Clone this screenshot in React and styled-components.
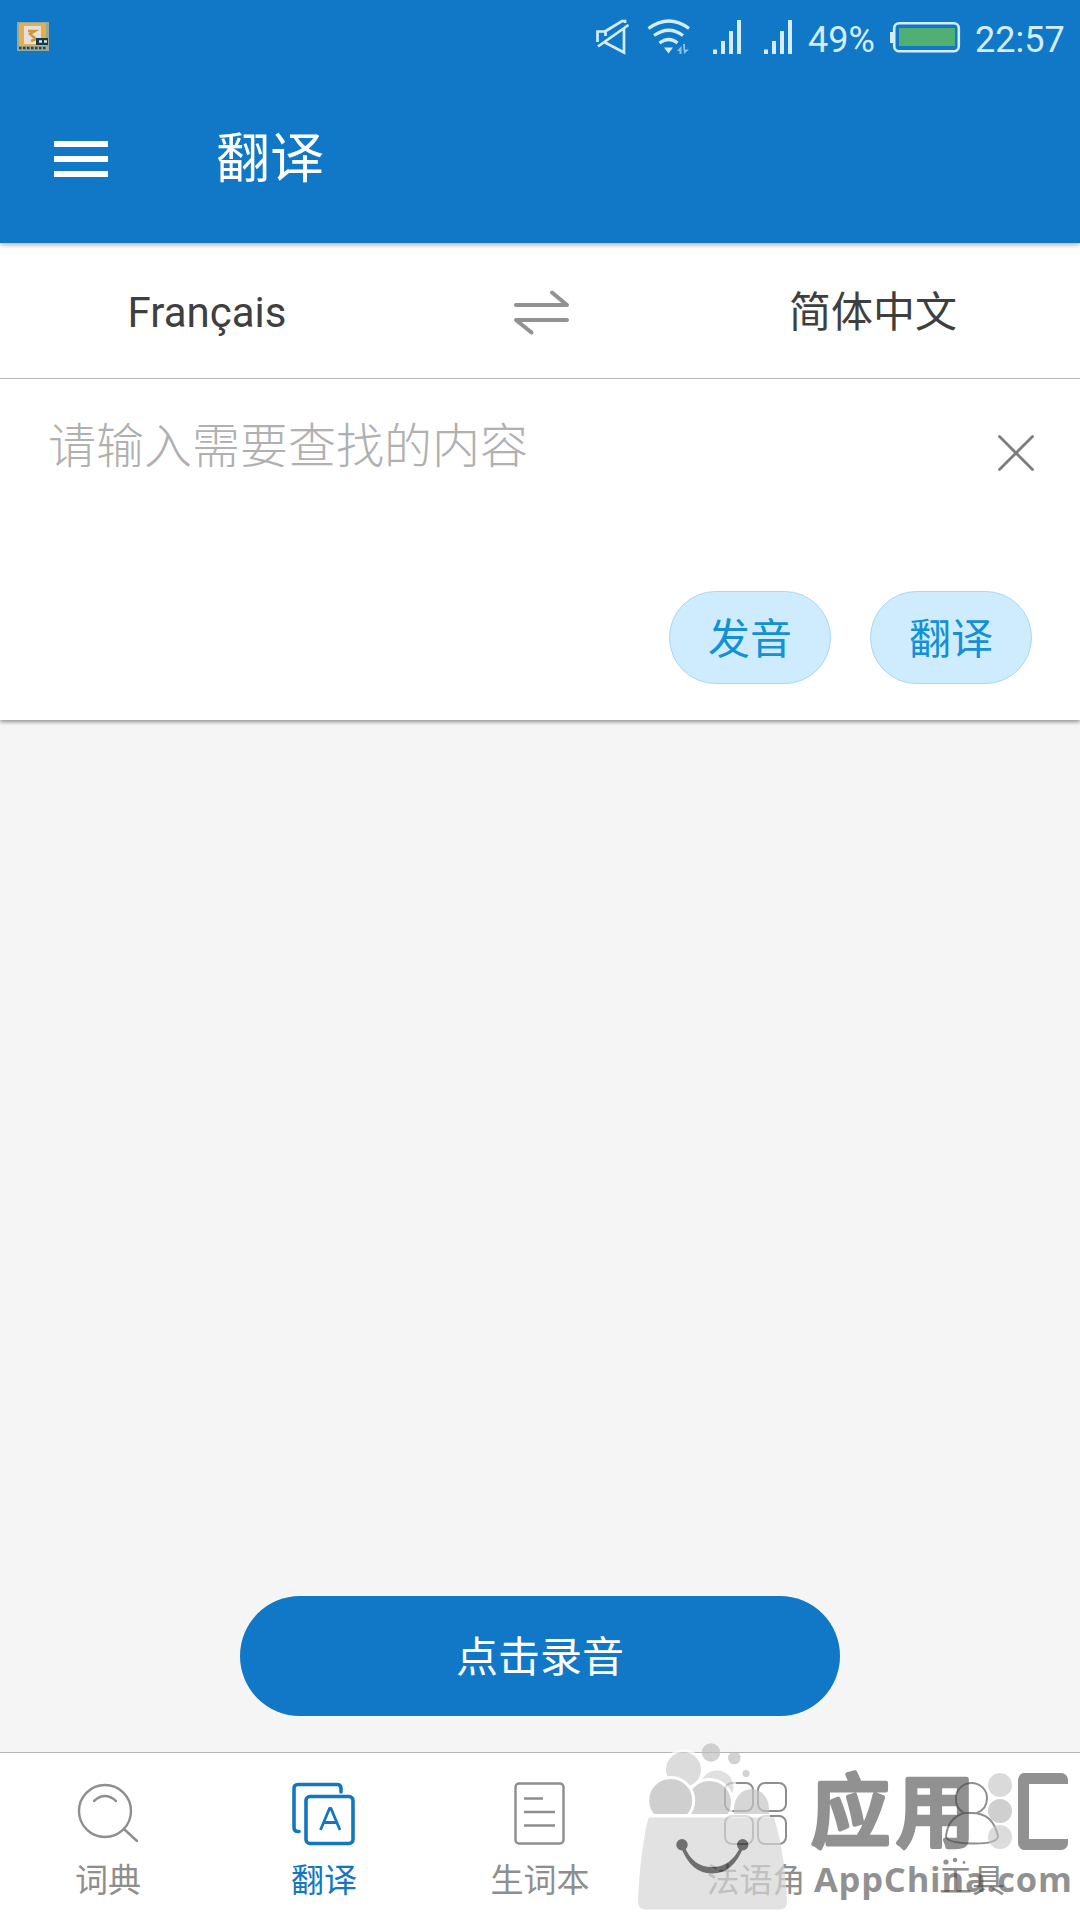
import React from "react";
import styled, { createGlobalStyle } from "styled-components";

const BLUE = "#1078c6";
const PALE = "#d3edff";
const GREY = "#8e8e8e";

const GlobalStyle = createGlobalStyle`
  * { box-sizing: border-box; }
  body { margin: 0; background: #f5f5f5; }
  svg { display: block; flex: none; }
  button { border: 0; padding: 0; margin: 0; background: none; font: inherit; color: inherit; }
`;

const Screen = styled.div`
  position: relative;
  display: flex;
  flex-direction: column;
  width: 1080px;
  height: 1920px;
  overflow: hidden;
  background: #f5f5f5;
  font-family: Roboto, "Noto Sans CJK SC", sans-serif;
`;

const Header = styled.header`
  position: relative;
  z-index: 1;
  height: 243px;
  background: ${BLUE};
  box-shadow: 0 2px 5px rgba(0, 0, 0, 0.3);
`;

const StatusBar = styled.div`
  display: flex;
  align-items: center;
  height: 74px;
  padding: 0 15px 0 16px;
  color: ${PALE};
`;

const StatusRight = styled.div`
  display: flex;
  align-items: center;
  margin-left: auto;
`;

const StatusText = styled.span`
  width: ${(p) => p.$width}px;
  padding-top: 5px;
  font-size: 36px;
  line-height: 44px;
  white-space: nowrap;
`;

const Gap = styled.i`
  width: ${(p) => p.$size}px;
`;

const TitleBar = styled.div`
  display: flex;
  align-items: center;
  height: 169px;
  padding: 0 54px 0;
  gap: 108px;
`;

const Menu = styled.button`
  display: flex;
  flex-direction: column;
  gap: 9px;
  width: 54px;
`;

const MenuLine = styled.span`
  height: 6px;
  background: #fff;
`;

const Title = styled.h1`
  margin: 0;
  padding-top: 2px;
  font-size: 54px;
  line-height: 64px;
  font-weight: 400;
  color: #fff;
`;

const LanguageRow = styled.div`
  display: grid;
  grid-template-columns: 414px 252px 414px;
  align-items: center;
  height: 136px;
  background: #fff;
  border-bottom: 1px solid #c4c4c4;
`;

const Language = styled.button`
  padding-top: 4px;
  font-size: 42px;
  line-height: 50px;
  text-align: center;
  color: #3f3f3f;
`;

const SwapButton = styled.button`
  display: flex;
  justify-content: center;
  padding: 2px 0 0 2px;
`;

const InputPanel = styled.section`
  display: flex;
  flex-direction: column;
  justify-content: space-between;
  height: 341px;
  padding: 38px 48px 36px;
  background: #fff;
  box-shadow: 0 2px 4px rgba(0, 0, 0, 0.4);
`;

const InputTop = styled.div`
  display: flex;
  justify-content: space-between;
  align-items: flex-start;
`;

const Placeholder = styled.span`
  font-size: 48px;
  line-height: 60px;
  font-weight: 300;
  color: #b0b0b0;
`;

const ClearButton = styled.button`
  margin: 17px -3px 0 0;
`;

const Chips = styled.div`
  display: flex;
  justify-content: flex-end;
  gap: 39px;
`;

const Chip = styled.button`
  width: 162px;
  height: 93px;
  padding-top: 4px;
  border: 1px solid #a6d8f4;
  border-radius: 47px;
  background: #cfecfe;
  color: #1490d5;
  font-size: 42px;
  line-height: 50px;
`;

const Body = styled.main`
  flex: 1;
  display: flex;
  align-items: flex-end;
  justify-content: center;
  padding-bottom: 36px;
`;

const RecordButton = styled.button`
  width: 600px;
  height: 120px;
  padding-top: 4px;
  border-radius: 60px;
  background: ${BLUE};
  color: #fff;
  font-size: 42px;
  line-height: 50px;
`;

const Nav = styled.nav`
  display: flex;
  height: 168px;
  border-top: 1px solid #b4b4b4;
  background: #fff;
`;

const NavItem = styled.a`
  flex: 1;
  display: flex;
  flex-direction: column;
  align-items: center;
  gap: 9px;
  padding-top: 25px;
  color: ${(p) => (p.$active ? "#1277c0" : GREY)};
  font-size: 33px;
  line-height: 44px;
`;

const Watermark = styled.div`
  position: absolute;
  left: 636px;
  bottom: 0;
  display: flex;
  align-items: flex-start;
  gap: 20px;
  width: 444px;
  height: 180px;
  pointer-events: none;
`;

const Bag = styled.svg`
  opacity: 0.7;
`;

const Wordmark = styled.div`
  padding-top: 28px;
  opacity: 0.6;
  color: #494949;
`;

const WordRow = styled.div`
  display: flex;
  align-items: center;
  height: 86px;
`;

const BrandLettering = styled.svg`
  overflow: visible;
  font-family: "Noto Sans CJK SC", sans-serif;
  font-weight: 500;
  font-size: 79px;
  letter-spacing: 6px;
  fill: currentColor;
  stroke: currentColor;
  stroke-width: 4.5px;
  stroke-linejoin: round;
`;

const Dots = styled.div`
  display: flex;
  flex-direction: column;
  gap: 2px;
  margin-left: 3px;
`;

const Dot = styled.i`
  width: 24px;
  height: 24px;
  border-radius: 50%;
  background: ${(p) => p.$color};
`;

const Bracket = styled.i`
  width: 50px;
  height: 77px;
  margin-left: 6px;
  border: 11px solid currentColor;
  border-right: 0;
  border-radius: 7px;
`;

const Sparks = styled.svg`
  margin-left: 132px;
  overflow: visible;
`;

const Domain = styled.div`
  margin-left: 3px;
  font-family: "Open Sans", sans-serif;
  font-weight: 700;
  font-size: 34.5px;
  letter-spacing: 0.8px;
  line-height: 40px;
  white-space: nowrap;
`;

const AppIcon = () => (
  <svg width="34" height="32" viewBox="0 0 34 32">
    <rect x="1" y="1" width="32" height="29" fill="#98a79a" />
    <rect x="3" y="2" width="27" height="23" fill="#dfb04d" />
    <rect x="8" y="5" width="17" height="18" fill="#e8dfdc" />
    <path d="M12 10h7l-5 3 6 5-5 2" fill="none" stroke="#cf9832" strokeWidth="2.5" />
    <rect x="20" y="17" width="12" height="7" fill="#17394a" />
    <path d="M23 20.5h3M28 20.5h3" stroke="#d9e5e8" strokeWidth="2.5" />
    <path d="M3 27h28" stroke="#2c4258" strokeWidth="2.5" strokeDasharray="2.500 1.500" />
  </svg>
);

const MuteIcon = () => (
  <svg width="36" height="40" viewBox="594 17 36 40" fill="none" stroke={PALE} strokeWidth="2.7">
    <path d="M597.500 42V31.500h8V36M605 31.500l17-10.500h3v2M624 28v24.500L605 42.500M598 46.500L628.500 25" />
  </svg>
);

const WifiIcon = () => (
  <svg width="46" height="40" viewBox="646 17 46 40" fill="none" stroke={PALE} strokeWidth="3.2">
    <path d="M648.500 28.500Q669 13.500 689 28.500M654 35.500Q669 25 683 35.500M659.500 43Q669 36 677.500 43" />
    <path d="M664 47.500h9l-4.500 6z" fill={PALE} stroke="none" />
    <path d="M677 51l4.500-5v8h-2v-3zM683 44h2v5.500h4l-5 4.500z" fill={PALE} stroke="none" opacity=".65" />
  </svg>
);

const SignalIcon = () => (
  <svg width="32" height="40" viewBox="711 17 32 40" fill={PALE}>
    <path d="M713 49.500h4V54h-4zM721 41h4v13h-4zM729 31h4v23h-4zM737 20h4v34h-4z" />
  </svg>
);

const BatteryIcon = () => (
  <svg width="72" height="40" viewBox="889 17 72 40">
    <path d="M890 32h4v11h-4z" fill={PALE} />
    <rect x="894.200" y="23.200" width="64.600" height="28" rx="5" fill="none" stroke={PALE} strokeWidth="2.600" />
    <rect x="899" y="28" width="56" height="18" fill="#50b074" />
  </svg>
);

const SwapIcon = () => (
  <svg width="60" height="48" viewBox="511 288 60 48" fill="none" stroke="#929292" strokeWidth="4" strokeLinecap="round" strokeLinejoin="round">
    <path d="M516 305h51l-15-12.500M567 320h-51l15.500 12.500" />
  </svg>
);

const CloseIcon = () => (
  <svg width="38" height="38" viewBox="0 0 38 38" stroke="#7d7d7d" strokeWidth="2.8" strokeLinecap="round">
    <path d="M2.500 2.500l33 33M35.500 2.500l-33 33" />
  </svg>
);

const Glyph = ({ children, width = 2.4 }) => (
  <svg width="72" height="72" viewBox="0 0 72 72" fill="none" stroke="currentColor" strokeWidth={width} strokeLinecap="round" strokeLinejoin="round">
    {children}
  </svg>
);

const SearchIcon = () => (
  <Glyph>
    <circle cx="33" cy="33" r="26" />
    <path d="M22 23Q33 13 44 23M52.500 51.500L65 63" />
  </Glyph>
);

const TranslateIcon = () => (
  <Glyph width={3.6}>
    <g transform="translate(2 .5)">
      <path d="M9 53H8q-4 0-4-4V10q0-4 4-4h39q4 0 4 4v3.500" />
      <rect x="16" y="18" width="47" height="47" rx="4" />
      <path d="M30.500 51.500L39.500 30h1.500l9 21.500M33.500 44h13" strokeWidth="2.800" strokeLinecap="butt" />
    </g>
  </Glyph>
);

const NotebookIcon = () => (
  <Glyph>
    <rect x="11.500" y="5.500" width="48" height="60" rx="3.500" />
    <path d="M20 20.500h19M20 34h31M20 47.500h31" strokeLinecap="butt" />
  </Glyph>
);

const GridIcon = () => (
  <Glyph width={2}>
    <rect x="5" y="5" width="28" height="28" rx="7" />
    <rect x="38" y="5" width="28" height="28" rx="7" />
    <rect x="5" y="38" width="28" height="28" rx="7" />
    <rect x="38" y="38" width="28" height="28" rx="7" />
  </Glyph>
);

const ToolsIcon = () => (
  <Glyph width={2}>
    <path d="M28 35Q19 30 20 20a15.500 15 0 0 1 31 0q0 11-10 15M28 35q-16 5-18 23 0 7 26 7.500T62 58Q57 35 35.500 35q-4 0-7.500 0" />
  </Glyph>
);

const BagIcon = () => (
  <Bag width="155" height="180" viewBox="636 1740 155 180">
    <g stroke="#fff" strokeWidth="3">
      <circle cx="683.500" cy="1769.500" r="19" fill="#cecece" />
      <circle cx="717" cy="1787" r="18" fill="#d4d4d4" />
      <circle cx="709.500" cy="1802.500" r="23" fill="#bebebe" />
      <circle cx="670.700" cy="1800.500" r="23" fill="#bcbcbc" />
    </g>
    <path d="M734 1815V1809a17.500 20 0 0 1 35 0v6z" fill="#c5c5c5" />
    <g fill="#bfbfbf">
      <circle cx="711" cy="1752.500" r="9.300" />
      <circle cx="734.300" cy="1758" r="6.300" />
      <circle cx="746" cy="1773.500" r="3.500" />
    </g>
    <path d="M640 1814h130v12H640z" fill="#fff" />
    <path d="M650 1817.500h124q11 36 13 84 0 8-8 8H646q-8 0-8-8 2-48 10-82 .5-2 2-2z" fill="#d6d6d6" />
    <g fill="#333">
      <circle cx="682" cy="1844.700" r="5.700" />
      <circle cx="742.700" cy="1844.700" r="5.700" />
      <path d="M680.500 1846q10 27.500 31.500 27.500t32-27.500l-3-1q-9 22-29 22t-28-22z" />
    </g>
  </Bag>
);

const tabs = [
  { label: "词典", Icon: SearchIcon },
  { label: "翻译", Icon: TranslateIcon, active: true },
  { label: "生词本", Icon: NotebookIcon },
  { label: "法语角", Icon: GridIcon },
  { label: "工具", Icon: ToolsIcon },
];

export default function App() {
  return (
    <Screen>
      <GlobalStyle />
      <Header>
        <StatusBar>
          <AppIcon />
          <StatusRight>
            <MuteIcon />
            <Gap $size={16} />
            <WifiIcon />
            <Gap $size={19} />
            <SignalIcon />
            <Gap $size={19} />
            <SignalIcon />
            <Gap $size={14} />
            <StatusText $width={66}>49%</StatusText>
            <Gap $size={15} />
            <BatteryIcon />
            <Gap $size={14} />
            <StatusText $width={90}>22:57</StatusText>
          </StatusRight>
        </StatusBar>
        <TitleBar>
          <Menu aria-label="menu">
            <MenuLine />
            <MenuLine />
            <MenuLine />
          </Menu>
          <Title>翻译</Title>
        </TitleBar>
      </Header>
      <LanguageRow>
        <Language>Français</Language>
        <SwapButton><SwapIcon /></SwapButton>
        <Language>简体中文</Language>
      </LanguageRow>
      <InputPanel>
        <InputTop>
          <Placeholder>请输入需要查找的内容</Placeholder>
          <ClearButton><CloseIcon /></ClearButton>
        </InputTop>
        <Chips>
          <Chip>发音</Chip>
          <Chip>翻译</Chip>
        </Chips>
      </InputPanel>
      <Body>
        <RecordButton>点击录音</RecordButton>
      </Body>
      <Nav>
        {tabs.map(({ label, Icon, active }) => (
          <NavItem key={label} $active={active}>
            <Icon />
            {label}
          </NavItem>
        ))}
      </Nav>
      <Watermark>
        <BagIcon />
        <Wordmark>
          <WordRow>
            <BrandLettering width="174" height="86" viewBox="0 0 174 86">
              <text x="0" y="73">应用</text>
            </BrandLettering>
            <Dots>
              <Dot $color="#c2c2c2" />
              <Dot $color="#b0b0b0" />
              <Dot $color="#c6c6c6" />
            </Dots>
            <Bracket />
          </WordRow>
          <Sparks width="24" height="5" viewBox="0 0 24 5" fill="currentColor">
            <circle cx="3" cy="8" r="2.600" />
            <circle cx="12" cy="6" r="2.200" />
            <circle cx="21" cy="8.500" r="1.400" />
          </Sparks>
          <Domain>AppChina.com</Domain>
        </Wordmark>
      </Watermark>
    </Screen>
  );
}
